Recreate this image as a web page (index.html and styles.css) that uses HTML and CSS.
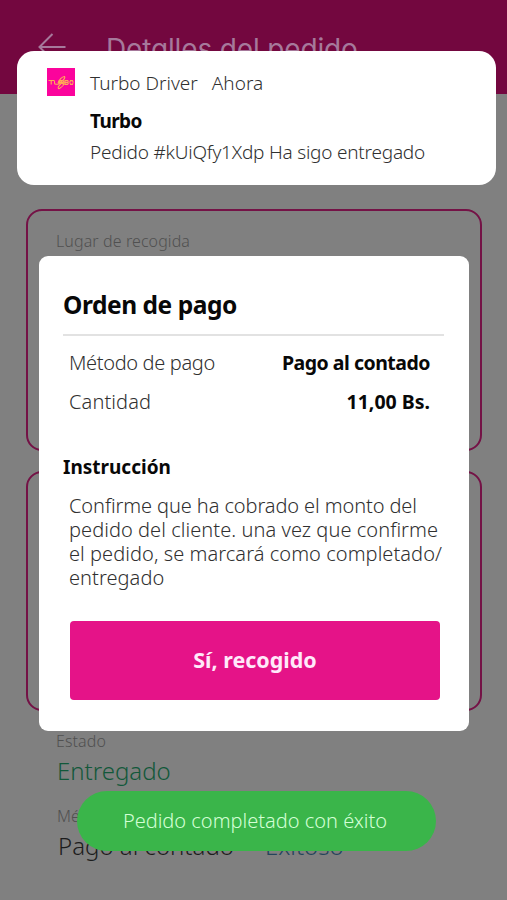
FILE: index.html
```
<!DOCTYPE html>
<html lang="es">
<head>
<meta charset="utf-8">
<title>Detalles del pedido</title>
<link rel="stylesheet" href="styles.css">
</head>
<body>
<div class="screen">
  <header class="topbar">
    <svg class="back" width="30" height="30" viewBox="0 0 30 30" fill="none" stroke="currentColor" stroke-width="2"><path d="M28.500 15H2.500M15.500 2L2.500 15L15.500 28"/></svg>
    <h1 class="topbar-title">Detalles del pedido</h1>
  </header>
  <main class="content">
    <section class="card pickup"><p class="label">Lugar de recogida</p></section>
    <section class="card delivery"></section>
    <section class="status">
      <p class="label status-label">Estado</p>
      <p class="value delivered">Entregado</p>
      <p class="label method-label">Método de pago</p>
      <div class="value-row">
        <p class="value">Pago al contado</p>
        <p class="value success">Exitoso</p>
      </div>
    </section>
  </main>

  <div class="dialog">
    <h2 class="dialog-title">Orden de pago</h2>
    <div class="row"><span class="key">Método de pago</span><strong class="amount method">Pago al contado</strong></div>
    <div class="row"><span class="key quantity">Cantidad</span><strong class="amount">11,00 Bs.</strong></div>
    <h3 class="subtitle">Instrucción</h3>
    <p class="instructions"><span class="first-line">Confirme que ha cobrado el monto del</span><br>pedido del cliente. una vez que confirme<br>el pedido, se marcará como completado/<br>entregado</p>
    <button class="confirm">Sí, recogido</button>
  </div>

  <div class="notification">
    <svg class="app-icon" width="28" height="28" viewBox="0 0 28 28">
      <rect width="28" height="28" fill="#fb049c"/>
      <g fill="none" stroke="#ffad55" stroke-width="1.100">
        <path d="M1.500 12.500H7M4.200 12.500V16.500M7.500 12.500V15Q7.500 16.300 9 16.300H10.500Q12 16.300 12 15V12.500M13 16.500V12.500H16L17 14L13.500 14.500L17 16.500M18 12.500H20.500Q22 13.500 20.500 14.400H18ZM18 14.400H20.500Q22 15.500 20.500 16.400H18ZM23.500 12.600H25.500Q27 14.500 25.500 16.400H23.500Q22 14.500 23.500 12.600Z"/>
        <path d="M11 15Q13.500 9 17.500 8.500Q19 10 14 14L17 15.500Q17.500 17 12.500 20.500Q10.500 21 11.500 18.500L15 14.500"/>
      </g>
    </svg>
    <div class="notification-body">
      <p class="notification-head"><span>Turbo Driver</span><span>Ahora</span></p>
      <p class="notification-title">Turbo</p>
      <p class="notification-text">Pedido #kUiQfy1Xdp Ha sigo entregado</p>
    </div>
  </div>

  <div class="toast">Pedido completado con éxito</div>
</div>
</body>
</html>
```

FILE: styles.css
```
* { box-sizing: border-box; }
body { margin: 0; }
h1, h2, h3, p { margin: 0; }

.screen {
  position: relative;
  width: 507px;
  height: 900px;
  overflow: hidden;
  background: #808080;
  color: #303030;
  font-family: "Noto Sans", sans-serif;
  font-weight: 300;
}

.topbar {
  display: flex;
  align-items: flex-start;
  gap: 39px;
  height: 94px;
  padding: 32px 0 0 37px;
  background: #73073f;
  color: #a6799b;
}
.topbar-title {
  font: 400 28px/34px Inter, sans-serif;
  font-feature-settings: "cv11";
  letter-spacing: -.15px;
}

.content { padding: 115px 25px 0 26px; }
.card {
  border: 2px solid #741246;
  border-radius: 16px;
}
.pickup { height: 242px; padding: 18px 28px; }
.pickup .label { letter-spacing: .1px; }
.delivery { height: 240px; margin-top: 20px; }
.label { font-size: 16px; line-height: 24px; color: #505050; }
.status { padding: 18px 30px 0; }
.status-label { letter-spacing: .1px; }
.value { font-size: 24px; line-height: 34px; color: #1c1c1c; }
.delivered { margin: 1px 0 0 1px; color: #12583a; }
.method-label { margin: 16px 0 0 1px; }
.value-row { display: flex; gap: 31px; margin: 1px 0 0 2px; }
.success { color: #25445a; }

.dialog {
  position: absolute;
  top: 256px;
  left: 39px;
  width: 430px;
  height: 475px;
  padding: 29px 24px 0;
  border-radius: 9px;
  background: #fff;
}
.dialog-title {
  height: 51px;
  margin-right: 1px;
  margin-bottom: 13px;
  border-bottom: 2px solid #e2e2e2;
  color: #080808;
  font-size: 24.5px;
  font-weight: 700;
  line-height: 40px;
  letter-spacing: -.45px;
}
.row {
  display: flex;
  justify-content: space-between;
  height: 39px;
  padding: 0 15px 0 6px;
  font-size: 20px;
  line-height: 28px;
}
.key { letter-spacing: -.35px; }
.quantity { letter-spacing: .1px; }
.amount { color: #080808; font-size: 19.5px; font-weight: 700; }
.method { letter-spacing: -.5px; }
.subtitle {
  margin-top: 26px;
  color: #080808;
  font-size: 19px;
  font-weight: 700;
  line-height: 28px;
}
.instructions {
  margin: 13px 0 0 6px;
  font-size: 20px;
  line-height: 24px;
  letter-spacing: .06px;
  white-space: nowrap;
}
.first-line { letter-spacing: -.1px; }
.confirm {
  display: block;
  width: 370px;
  height: 79px;
  margin: 31px 0 0 7px;
  padding: 0 0 2px;
  border: 0;
  border-radius: 4px;
  background: #e51388;
  color: #ffe9fa;
  font: 700 21.5px "Noto Sans", sans-serif;
}

.notification {
  position: absolute;
  top: 51px;
  left: 17px;
  display: flex;
  gap: 15px;
  width: 479px;
  height: 134px;
  padding: 17px 30px;
  border-radius: 17px;
  background: #fff;
  font-size: 19px;
  line-height: 28px;
}
.notification-head { display: flex; gap: 14px; padding-top: 1px; }
.notification-title {
  margin-top: 10px;
  color: #080808;
  font-weight: 700;
  letter-spacing: -.6px;
}
.notification-text { margin-top: 3px; letter-spacing: -.22px; }

.toast {
  position: absolute;
  top: 791px;
  left: 77px;
  width: 359px;
  height: 60px;
  padding-right: 3px;
  border-radius: 30px;
  background: #3ab54a;
  color: #d3ffd5;
  font-size: 20px;
  line-height: 59px;
  text-align: center;
}
```
